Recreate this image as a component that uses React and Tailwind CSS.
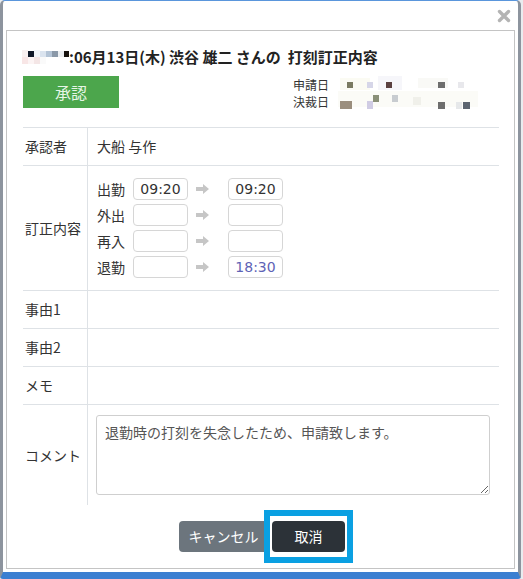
import React from "react";

const Arrow = () => (
  <svg width="13" height="10" viewBox="0 0 13 10">
    <path d="M0 3h7V0l6 5-6 5V7H0z" fill="#c6c6c6" />
  </svg>
);

const TitleMosaic = () => (
  <svg width="48" height="15" viewBox="0 0 48 15" className="shrink-0">
    <rect x="0" y="0" width="6" height="7" fill="#f8f0f0" />
    <rect x="6" y="1" width="6" height="6" fill="#101828" />
    <rect x="12" y="0" width="6" height="7" fill="#f2f5fa" />
    <rect x="18" y="1" width="6" height="6" fill="#dbe4ef" />
    <rect x="24" y="1" width="6" height="6" fill="#b4c4d6" />
    <rect x="30" y="1" width="6" height="6" fill="#8a98a8" />
    <rect x="36" y="1" width="6" height="6" fill="#eceff2" />
    <rect x="42" y="1" width="5" height="6" fill="#16120e" />
    <rect x="0" y="7" width="6" height="7" fill="#f8e6e6" />
    <rect x="6" y="7" width="6" height="7" fill="#fcf4f4" />
    <rect x="12" y="7" width="6" height="7" fill="#f4e6e6" />
    <rect x="18" y="7" width="6" height="7" fill="#fafafa" />
  </svg>
);

const DateMosaic = () => (
  <svg width="140" height="34" viewBox="0 0 140 34" className="shrink-0">
    <rect x="0" y="0" width="140" height="34" fill="#ffffff" />
    <rect x="2" y="2" width="30" height="12" fill="#fbfbf3" />
    <rect x="40" y="0" width="24" height="14" fill="#f6f6fa" />
    <rect x="80" y="2" width="30" height="10" fill="#f9f9f6" />
    <rect x="9" y="6" width="6" height="6" fill="#7a7a60" />
    <rect x="29" y="6" width="6" height="6" fill="#d6d6e8" />
    <rect x="48" y="6" width="6" height="6" fill="#5a4040" />
    <rect x="100" y="6" width="7" height="6" fill="#6e6e6e" />
    <rect x="120" y="6" width="6" height="6" fill="#e8e8ec" />
    <rect x="0" y="15" width="140" height="16" fill="#fbfbf7" />
    <rect x="35" y="19" width="6" height="7" fill="#8a9078" />
    <rect x="54" y="19" width="6" height="7" fill="#c8ccd0" />
    <rect x="2" y="25" width="12" height="8" fill="#9a8e7e" />
    <rect x="29" y="25" width="6" height="8" fill="#d0cce4" />
    <rect x="75" y="21" width="8" height="8" fill="#f0f0ea" />
    <rect x="100" y="26" width="7" height="7" fill="#6e6e6e" />
    <rect x="118" y="26" width="6" height="7" fill="#e6e8ea" />
    <rect x="125" y="26" width="7" height="7" fill="#5c6470" />
  </svg>
);

const TimeBox = ({ value, blue }) => (
  <div
    className={
      "w-[55px] h-[22px] shrink-0 border border-[#d6d6d6] rounded-[4px] flex items-center justify-center text-[14px] font-['DejaVu_Sans',sans-serif] " +
      (blue ? "text-[#5e63b6]" : "text-[#333]")
    }
  >
    {value}
  </div>
);

const TimeRow = ({ label, from, to, blue }) => (
  <div className="flex items-center h-[22px]">
    <div className="w-[36px] shrink-0 text-[14px] leading-[22px]">{label}</div>
    <TimeBox value={from} />
    <div className="w-[40px] shrink-0 flex items-center pl-[8px]">
      <Arrow />
    </div>
    <TimeBox value={to} blue={blue} />
  </div>
);

const Row = ({ label, children, h = "h-[38px]" }) => (
  <div className={"grid grid-cols-[65px_1fr] border-t border-[#dee2e6] " + h}>
    <div className="border-r border-[#dee2e6] flex items-center pl-[2px] text-[14px]">{label}</div>
    <div className="flex items-center pl-[9px]">{children}</div>
  </div>
);

export default function App() {
  return (
    <div className="w-[523px] h-[579px] bg-[#e9ecef] font-['Noto_Sans_CJK_JP',sans-serif] text-[#333]">
      <div className="w-[521px] h-[579px] bg-white rounded-t-[5px] rounded-b-[3px] border-l-[3px] border-r-[3px] border-l-[#8d949e] border-r-[#8d949e] border-t border-t-[#5a96dc] border-b-[7px] border-b-[#3b7fd1] flex flex-col">
        <div className="h-[29px] flex items-center justify-end pr-[7px] shrink-0">
          <svg width="14" height="14" viewBox="0 0 14 14">
            <path d="M2.5 2.5l9 9M11.5 2.5l-9 9" stroke="#b4b4b4" strokeWidth="3.4" strokeLinecap="round" />
          </svg>
        </div>
        <div className="mx-[3px] border border-[#c4c4c4] bg-white pl-[16px] pr-[15px] pt-[16px] pb-[16px] flex flex-col">
          <div className="flex items-center h-[20px] text-[15px] font-bold leading-[20px] text-[#222]">
            <span className="-ml-[1px]">
              <TitleMosaic />
            </span>
            <span className="-ml-[1px]">:06月13日(木) 渋谷 雄二 さんの&nbsp;&nbsp;打刻訂正内容</span>
          </div>
          <div className="flex mt-[9px] h-[32px]">
            <div className="w-[96px] h-[32px] bg-[#4ca64c] flex items-center justify-center text-[16px] text-[#e6f6e6]">
              承認
            </div>
            <div className="ml-[174px] flex">
              <div className="flex flex-col text-[12px] leading-[17px] text-[#333]">
                <span>申請日</span>
                <span>決裁日</span>
              </div>
              <div className="ml-[9px]">
                <DateMosaic />
              </div>
            </div>
          </div>
          <div className="mt-[19px] flex flex-col">
            <Row label="承認者">
              <span className="text-[14px]">大船 与作</span>
            </Row>
            <Row label="訂正内容" h="h-[125px]">
              <div className="flex flex-col gap-[4px] py-[12px]">
                <TimeRow label="出勤" from="09:20" to="09:20" />
                <TimeRow label="外出" from="" to="" />
                <TimeRow label="再入" from="" to="" />
                <TimeRow label="退勤" from="" to="18:30" blue />
              </div>
            </Row>
            <Row label="事由1" />
            <Row label="事由2" />
            <Row label="メモ" />
            <div className="grid grid-cols-[65px_1fr] border-t border-[#dee2e6] h-[101px]">
              <div className="border-r border-[#dee2e6] flex items-center pl-[2px] text-[14px]">コメント</div>
              <div className="pl-[8px] pr-[8px] pt-[10px]">
                <textarea
                  readOnly
                  defaultValue="退勤時の打刻を失念したため、申請致します。"
                  className="w-[394px] h-[80px] border border-[#cfcfcf] rounded-[3px] px-[8px] py-[6px] text-[14px] leading-[20px] text-[#555] font-['Noto_Sans_CJK_JP',sans-serif] outline-none"
                />
              </div>
            </div>
          </div>
          <div className="mt-[16px] flex justify-center">
            <div className="relative flex gap-[4px] ml-[2px]">
              <div className="w-[89px] h-[31px] rounded-[4px] bg-[#6c757d] text-white text-[14px] flex items-center justify-center">
                キャンセル
              </div>
              <div className="w-[73px] h-[31px] rounded-[4px] bg-[#2c3238] text-white text-[14px] flex items-center justify-center">
                取消
              </div>
              <div className="absolute left-[85px] top-[-11px] w-[89px] h-[53px] border-[6px] border-[#0aa0e2]">
                <div className="w-full h-full border-[2px] border-white" />
              </div>
            </div>
          </div>
        </div>
      </div>
    </div>
  );
}
